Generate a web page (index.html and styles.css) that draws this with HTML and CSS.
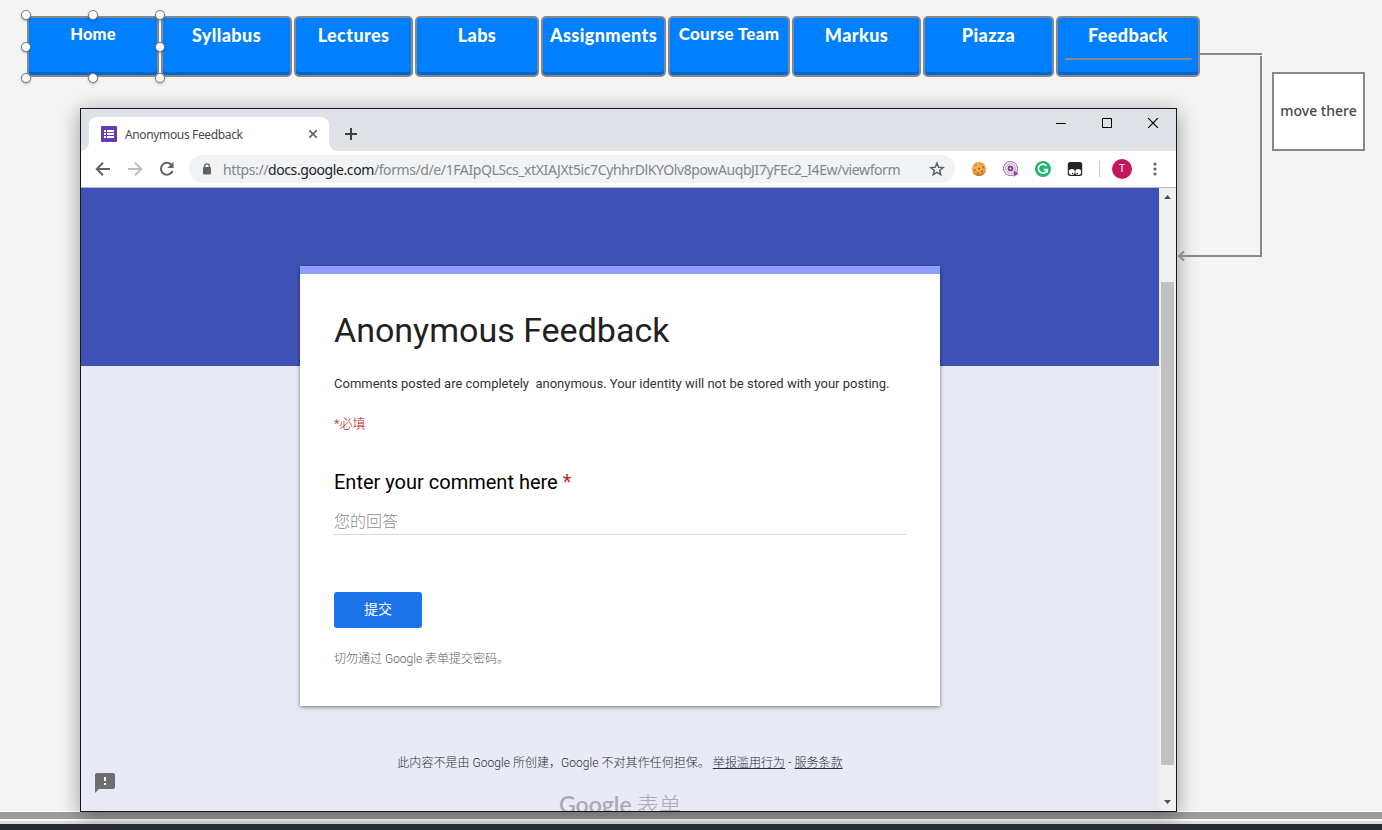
FILE: index.html
```html
<!DOCTYPE html>
<html lang="zh-CN">
<head>
<meta charset="utf-8">
<title>Anonymous Feedback</title>
<link rel="stylesheet" href="styles.css">
</head>
<body>
<div class="desktop">
  <nav class="nav">
    <a class="nav-item nav-home">Home</a>
    <a class="nav-item">Syllabus</a>
    <a class="nav-item">Lectures</a>
    <a class="nav-item">Labs</a>
    <a class="nav-item nav-assign">Assignments</a>
    <a class="nav-item nav-team">Course Team</a>
    <a class="nav-item">Markus</a>
    <a class="nav-item">Piazza</a>
    <a class="nav-item nav-feedback">Feedback</a>
  </nav>

  <div class="strip"><div class="strip-grey"></div><div class="strip-light"></div><div class="strip-dark"></div></div>

  <section class="window">
    <header class="titlebar">
      <div class="tab">
        <svg class="tab-icon" width="16" height="16" viewBox="0 0 16 16"><rect width="16" height="16" rx="1" fill="#673ab7"/><path d="M3 4h2v2H3zM3 7h2v2H3zM3 10h2v2H3zM6 4h7v2H6zM6 7h7v2H6zM6 10h7v2H6z" fill="#fff"/></svg>
        <span class="tab-title">Anonymous Feedback</span>
        <svg class="tab-close" width="8" height="8" viewBox="0 0 8 8"><path d="M.3.3l7.400 7.400M7.700.3L.3 7.700" stroke="#5f6368" stroke-width="1.600"/></svg>
      </div>
      <svg class="tab-new" width="12" height="12" viewBox="0 0 12 12"><path d="M6 0v12M0 6h12" stroke="#3c4043" stroke-width="2"/></svg>
      <div class="controls">
        <svg width="10" height="11" viewBox="0 0 10 11"><path d="M0 5.500h10" stroke="#000"/></svg>
        <svg width="10" height="10" viewBox="0 0 10 10"><path d="M.5.500h9v9H.5z" fill="none" stroke="#000"/></svg>
        <svg width="10" height="10" viewBox="0 0 10 10"><path d="M0 0l10 10M10 0L0 10" stroke="#000" stroke-width="1.200"/></svg>
      </div>
    </header>

    <div class="toolbar">
      <svg class="tool-back" width="16" height="14" viewBox="0 0 16 14"><path d="M15 7H2M8 .8L1.800 7 8 13.200" fill="none" stroke="#5f6368" stroke-width="2"/></svg>
      <svg class="tool-forward" width="16" height="14" viewBox="0 0 16 14"><path d="M0 7h13M7 .8L13.200 7 7 13.200" fill="none" stroke="#babcbe" stroke-width="2"/></svg>
      <svg class="tool-reload" width="16" height="16" viewBox="0 0 16 16"><path d="M12.300 3.600A6 6 0 1 0 13.500 10" fill="none" stroke="#5f6368" stroke-width="2"/><path d="M14.500 .8V7H8.300z" fill="#5f6368"/></svg>
      <div class="address">
        <svg class="lock" width="10" height="12" viewBox="0 0 10 12"><rect x="1" y="4" width="8" height="7.500" rx="1" fill="#5f6368"/><path d="M2.700 5V3a2.300 2.200 0 0 1 4.600 0v2" fill="none" stroke="#5f6368" stroke-width="1.300"/></svg>
        <span class="url">https://<b>docs.google.com</b>/forms/d/e/1FAIpQLScs_xtXIAJXt5ic7CyhhrDlKYOlv8powAuqbJI7yFEc2_I4Ew/viewform</span>
        <svg class="star" width="16" height="16" viewBox="0 0 16 16"><path d="M8 2l1.700 4.200 4.400.3-3.400 2.900 1.100 4.300L8 11.400l-3.800 2.300 1.100-4.300-3.400-2.900 4.400-.3z" fill="none" stroke="#5f6368" stroke-width="1.500"/></svg>
      </div>
      <div class="extensions">
        <svg width="16" height="16" viewBox="0 0 16 16"><circle cx="8" cy="8" r="7" fill="#e8a040"/><circle cx="7" cy="6" r="4.500" fill="#f2b354"/><path d="M1.500 11a7 7 0 0 0 13-1c-3 3.500-9 4-13 1z" fill="#cc7a2b"/><g fill="#86480f"><circle cx="5" cy="4" r=".8"/><circle cx="9" cy="3" r=".6"/><circle cx="12" cy="6" r=".8"/><circle cx="8" cy="7.500" r=".9"/><circle cx="4" cy="9" r=".8"/><circle cx="7" cy="12" r=".8"/><circle cx="11" cy="10.500" r=".8"/></g></svg>
        <svg width="16" height="16" viewBox="0 0 16 16"><circle cx="7.500" cy="7.500" r="7" fill="#fff" stroke="#8e5a9f"/><circle cx="7.500" cy="7.500" r="4.800" fill="none" stroke="#a982b5" stroke-width="1"/><circle cx="7.500" cy="7.500" r="2" fill="#fff" stroke="#7c3c92" stroke-width="2"/><path d="M10.500 9v7l5.500-3.500z" fill="#8c4a9e" stroke="#fff" stroke-width=".4"/></svg>
        <svg width="16" height="16" viewBox="0 0 16 16"><circle cx="8" cy="8" r="8" fill="#22b573"/><path d="M11.600 5A4.500 4.500 0 1 0 12.300 8.600H8.800M12.200 8.500v3" fill="none" stroke="#fff" stroke-width="1.600"/></svg>
        <svg width="16" height="16" viewBox="0 0 16 16"><rect x=".8" y="1" width="14.400" height="14" rx="2.500" fill="#252525"/><circle cx="4.800" cy="11" r="3" fill="#fff"/><circle cx="11.200" cy="11" r="3" fill="#fff"/><circle cx="5.600" cy="12.500" r=".8" fill="#252525"/><circle cx="10.300" cy="12.500" r=".8" fill="#252525"/></svg>
      </div>
      <span class="divider"></span>
      <span class="avatar">T</span>
      <svg class="menu" width="4" height="14" viewBox="0 0 4 14" fill="#5f6368"><circle cx="2" cy="2" r="1.600"/><circle cx="2" cy="7" r="1.600"/><circle cx="2" cy="12" r="1.600"/></svg>
    </div>

    <div class="viewport">
      <main class="page">
        <div class="form-card">
          <h1>Anonymous Feedback</h1>
          <p class="description">Comments posted are completely&nbsp; anonymous. Your identity will not be stored with your posting.</p>
          <p class="required">*必填</p>
          <h2>Enter your comment here <span>*</span></h2>
          <div class="answer">您的回答</div>
          <div class="submit">提交</div>
          <p class="warning">切勿通过 Google 表单提交密码。</p>
        </div>
        <footer class="disclaimer">此内容不是由 Google 所创建，Google 不对其作任何担保。 <u>举报滥用行为</u> - <u>服务条款</u></footer>
        <div class="brand"><span>Google</span> 表单</div>
        <svg class="report" width="20" height="20" viewBox="0 0 20 20"><path d="M2 0h16a2 2 0 0 1 2 2v12a2 2 0 0 1-2 2H4l-4 4V2a2 2 0 0 1 2-2z" fill="#6d6e74"/><path d="M9 4h2v4H9zM9 10h2v2H9z" fill="#fff"/></svg>
      </main>
      <div class="scrollbar">
        <svg width="7" height="4" viewBox="0 0 7 4"><path d="M0 4L3.500 0 7 4z" fill="#505050"/></svg>
        <div class="thumb"></div>
        <svg width="7" height="4" viewBox="0 0 7 4"><path d="M0 0h7L3.500 4z" fill="#505050"/></svg>
      </div>
    </div>
  </section>

  <svg class="connector" width="90" height="214" viewBox="0 0 90 214"><path d="M24 6h63M86 8v201M4 208h83M9 203.500L4 208l5 4.500" fill="none" stroke="#888" stroke-width="2"/></svg>
  <svg class="handles" width="146" height="82" viewBox="0 0 146 82"><g fill="#fff" stroke="#777" stroke-width="1"><circle cx="6" cy="6" r="4.500"/><circle cx="73" cy="6" r="4.500"/><circle cx="140" cy="6" r="4.500"/><circle cx="6" cy="38" r="4.500"/><circle cx="140" cy="38" r="4.500"/><circle cx="6" cy="69" r="4.500"/><circle cx="73" cy="69" r="4.500"/><circle cx="140" cy="69" r="4.500"/></g></svg>
  <div class="note">move there</div>
</div>
</body>
</html>
```

FILE: styles.css
```css
* { box-sizing: border-box; }
body { margin: 0; font-family: "Noto Sans", "Noto Sans CJK SC", sans-serif; }
h1, h2, p { margin: 0; font-weight: 400; }
svg { display: block; flex: none; }

.desktop {
  position: relative;
  display: flex;
  flex-direction: column;
  justify-content: space-between;
  width: 1382px;
  height: 830px;
  overflow: hidden;
  background: #f4f4f4;
}

/* Navigation buttons */
.nav {
  display: grid;
  grid-template-columns: 132px 131px 119px 124px 125px 122px 129px 131px 144px;
  column-gap: 2px;
  padding: 16px 0 0 27px;
}
.nav-item {
  height: 61px;
  padding-top: 5px;
  border: 2px solid #888;
  border-radius: 5px;
  background: #0080ff;
  box-shadow: inset 0 -3px #0066cc;
  color: #fff;
  font-family: Lato, "Noto Sans", sans-serif;
  font-size: 18px;
  font-weight: 900;
  letter-spacing: .4px;
  line-height: 24px;
  text-align: center;
  white-space: nowrap;
}
.nav-home { padding-top: 4px; font-size: 16.5px; letter-spacing: .2px; }
.nav-team { padding-top: 4px; font-size: 17px; letter-spacing: .3px; }
.nav-feedback::after {
  content: "";
  display: block;
  height: 2px;
  margin: 11px 6px 0 7px;
  background: #888;
}

/* Strip under the canvas */
.strip-grey { height: 8px; background: #9d9d9d; border-top: 1px solid #fff; }
.strip-light { height: 5px; background: linear-gradient(#fff 0 2px, #dcdcdc 2px); }
.strip-dark { height: 6px; background: #282c35; }

/* Browser window */
.window {
  position: absolute;
  left: 80px;
  top: 108px;
  display: flex;
  flex-direction: column;
  width: 1097px;
  height: 704px;
  border: 1px solid #151719;
  background: #fff;
  box-shadow: 0 4px 20px rgba(0, 0, 0, .38);
}
.titlebar { display: flex; height: 42px; padding: 8px 18px 0 8px; background: #dee1e6; }
.tab {
  position: relative;
  display: flex;
  align-items: center;
  width: 240px;
  height: 34px;
  padding: 0 12px;
  border-radius: 8px 8px 0 0;
  background: #fff;
}
.tab::before, .tab::after {
  content: "";
  position: absolute;
  bottom: 0;
  width: 8px;
  height: 8px;
}
.tab::before { left: -8px; background: radial-gradient(circle at 0 0, transparent 7.5px, #fff 8px); }
.tab::after { right: -8px; background: radial-gradient(circle at 100% 0, transparent 7.5px, #fff 8px); }
.tab-title { flex: 1; margin-left: 8px; color: #45494d; font-size: 12px; letter-spacing: -.36px; }
.tab-new { margin: 11px 0 0 16px; }
.controls { display: flex; gap: 36px; margin: 1px 0 0 auto; }

.toolbar { display: flex; align-items: center; height: 37px; border-bottom: 1px solid #b6b4b6; background: #fff; }
.tool-back { margin-left: 14px; }
.tool-forward { margin-left: 17px; }
.tool-reload { margin-left: 15px; }
.address {
  display: flex;
  align-items: center;
  width: 766px;
  height: 28px;
  margin-left: 14px;
  padding: 0 10px 0 13px;
  border-radius: 14px;
  background: #f1f3f4;
}
.url { flex: 1; margin-left: 11px; color: #80868b; font-size: 14px; letter-spacing: -.405px; white-space: nowrap; }
.url b { color: #202124; font-weight: 400; }
.extensions { display: flex; gap: 16px; margin-left: 16px; }
.divider { width: 1px; height: 16px; margin-left: 16px; background: #c9cbcd; }
.avatar {
  width: 20px;
  height: 20px;
  margin-left: 12px;
  border-radius: 50%;
  background: #c2185b;
  color: #fff;
  font: 10px/20px Roboto, sans-serif;
  text-align: center;
}
.menu { margin-left: 20.500px; }

/* Form page */
.viewport { display: flex; height: 623px; }
.page {
  position: relative;
  width: 1078px;
  height: 623px;
  padding-top: 78px;
  overflow: hidden;
  background: linear-gradient(#3f51b5 178px, #e8eaf6 178px);
  font-family: Roboto, "Noto Sans CJK SC", sans-serif;
}
.form-card {
  width: 640px;
  height: 440px;
  margin: 0 auto;
  padding: 33px 34px 0;
  border-top: 8px solid #8c9eff;
  background: #fff;
  box-shadow: 0 1px 4px rgba(0, 0, 0, .5);
}
.form-card h1 { color: #212121; font-size: 34px; line-height: 46px; }
.description { margin-top: 21px; color: #333; font-size: 13px; line-height: 20px; white-space: nowrap; }
.required { margin-top: 20px; color: #b81414; font-size: 13px; line-height: 20px; font-weight: 300; }
.form-card h2 { margin-top: 33px; color: #000; font-size: 20px; line-height: 30px; }
.form-card h2 span { color: #c62828; }
.answer { height: 26px; margin-top: 12px; border-bottom: 1px solid #dadada; color: #8e8e8e; font-size: 16px; font-weight: 300; line-height: 25px; }
.submit {
  width: 88px;
  height: 36px;
  margin-top: 57px;
  border-radius: 3px;
  background: #1a73e8;
  color: #fff;
  font-size: 14px;
  line-height: 35px;
  text-align: center;
}
.warning { margin-top: 21px; color: #5c5c5c; font-size: 12px; line-height: 20px; font-weight: 300; }
.disclaimer { margin-top: 47px; color: #2c2e34; font-size: 12px; font-weight: 300; letter-spacing: .04px; line-height: 20px; text-align: center; white-space: nowrap; }
.brand { margin-top: 15px; color: #a9abb5; font-size: 22px; font-weight: 300; line-height: 32px; text-align: center; }
.brand span { font-family: Lato, sans-serif; font-weight: 600; font-size: 23px; }
.report { position: absolute; left: 14px; top: 585px; }
.scrollbar { display: flex; flex-direction: column; align-items: center; width: 17px; padding: 7px 0 7px; background: #f1f1f1; }
.thumb { width: 13px; height: 483px; margin: 83px 0 35px; background: #c1c1c1; }

/* Canvas annotations */
.connector { position: absolute; left: 1175px; top: 48px; }
.handles { position: absolute; left: 20px; top: 9px; filter: drop-shadow(0 1px 1px rgba(0, 0, 0, .3)); }
.note {
  position: absolute;
  left: 1272px;
  top: 72px;
  width: 93px;
  height: 79px;
  border: 2px solid #888;
  background: #fff;
  color: #484848;
  font-size: 14px;
  font-weight: 500;
  line-height: 74px;
  text-align: center;
}
```
